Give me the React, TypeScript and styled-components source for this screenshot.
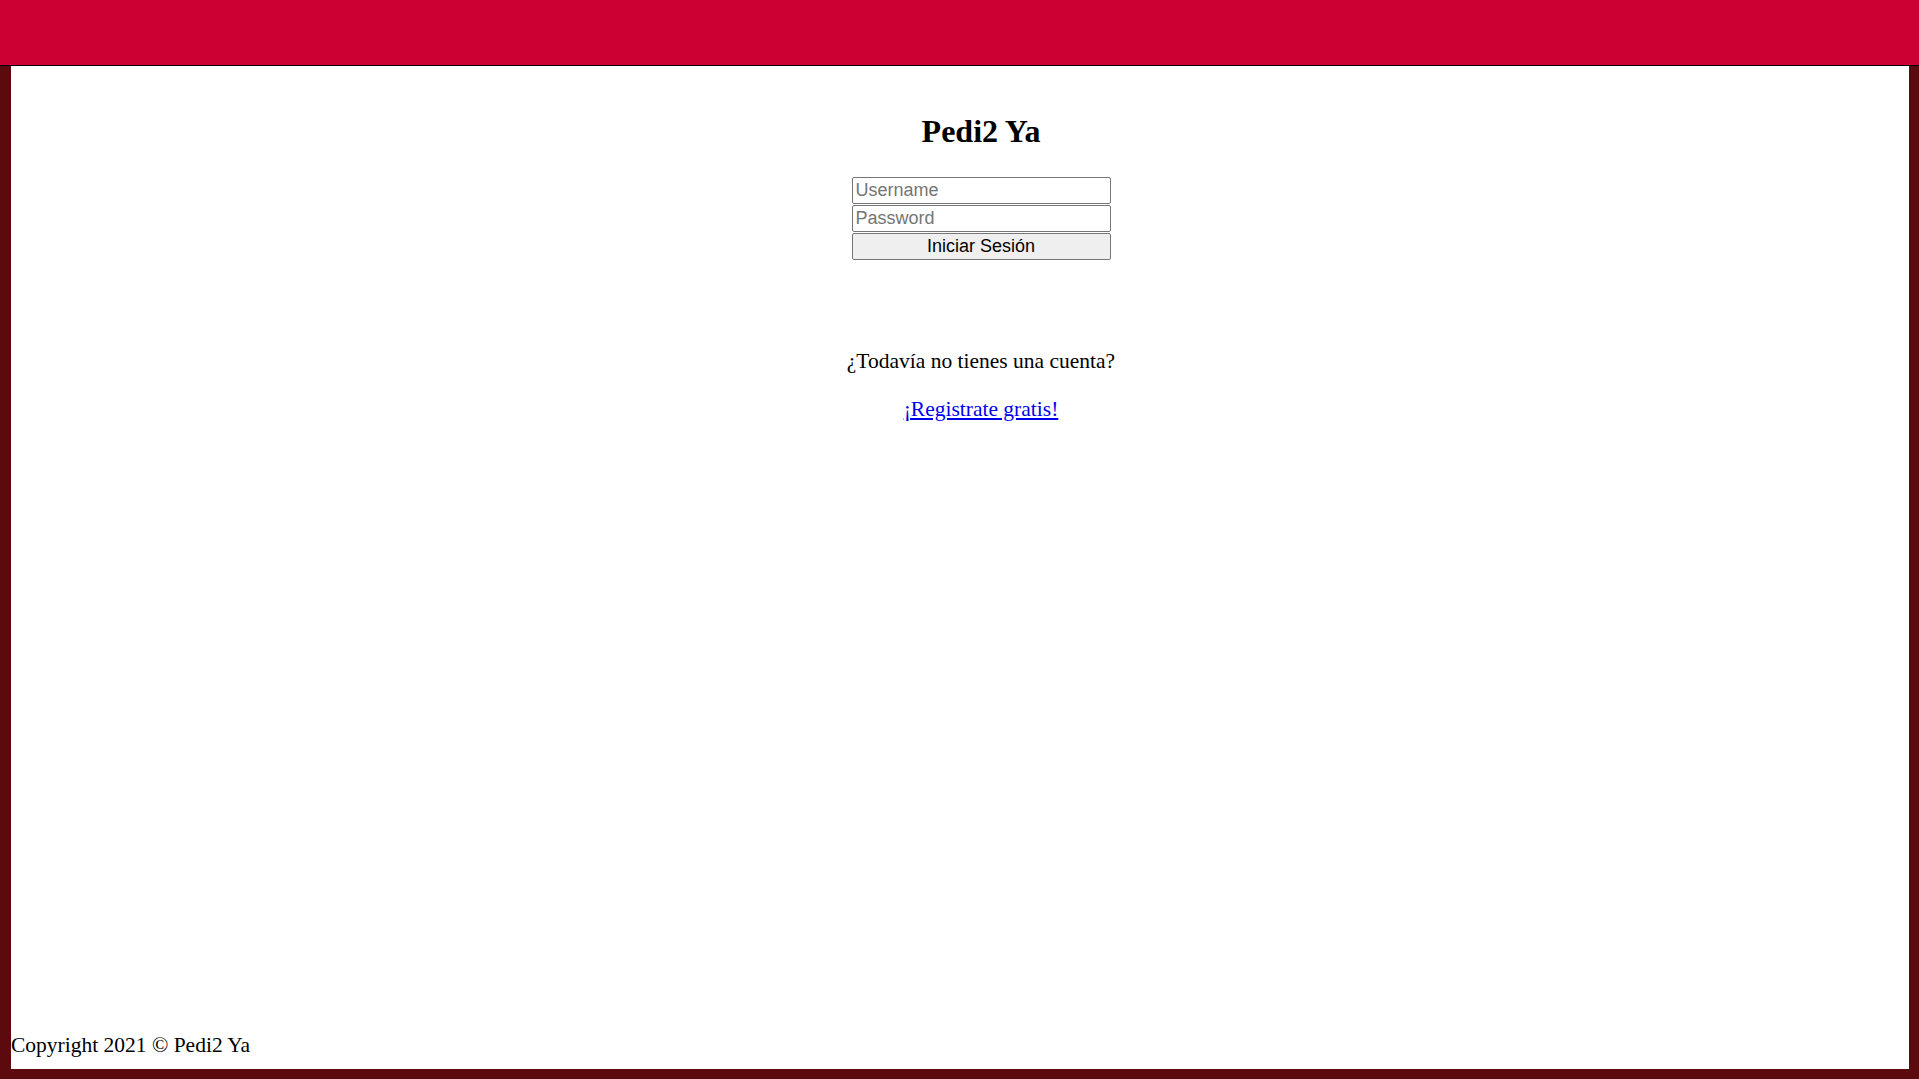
import styled, { createGlobalStyle } from "styled-components";

const GlobalStyle = createGlobalStyle`
  html, body {
    margin: 0;
    padding: 0;
    height: 100%;
  }

  body {
    background-color: #5c0a0e;
    font-family: "Liberation Serif", "Times New Roman", serif;
  }

  #root {
    height: 100%;
  }
`;

const App = () => {
  return (
    <>
      <GlobalStyle />
      <Page>
        <Header />
        <Main>
          <Content>
            <Title>Pedi2 Ya</Title>
            <LoginForm onSubmit={(event) => event.preventDefault()}>
              <Field type="text" placeholder="Username" />
              <Field type="password" placeholder="Password" />
              <LoginButton type="submit">Iniciar Sesión</LoginButton>
            </LoginForm>
            <Question>¿Todavía no tienes una cuenta?</Question>
            <RegisterLink href="#">¡Registrate gratis!</RegisterLink>
          </Content>
          <Footer>Copyright 2021 © Pedi2 Ya</Footer>
        </Main>
      </Page>
    </>
  );
};

const Page = styled.div`
  height: 100%;
  display: flex;
  flex-direction: column;
`;

const Header = styled.header`
  height: 65px;
  flex-shrink: 0;
  background-color: #cc0033;
  border-bottom: 1px solid #000;
`;

const Main = styled.main`
  flex: 1;
  margin: 0 10px 10px 11px;
  background-color: #fff;

  display: flex;
  flex-direction: column;
`;

const Content = styled.div`
  flex: 1;
  padding-left: 42px;

  display: flex;
  flex-direction: column;
  align-items: center;
`;

const Title = styled.h1`
  margin: 47px 0 0;
  font-size: 32px;
  line-height: 37px;
  font-weight: bold;
`;

const LoginForm = styled.form`
  width: 259px;
  margin-top: 27px;

  display: flex;
  flex-direction: column;
  gap: 1px;
`;

const Field = styled.input`
  box-sizing: border-box;
  height: 27px;
  width: 100%;
  margin: 0;
  padding: 1px 3px;
  border: 1px solid #767676;
  border-radius: 2px;
  font-family: Arial, "Liberation Sans", sans-serif;
  font-size: 18px;
  color: #000;

  &::placeholder {
    color: #757575;
  }
`;

const LoginButton = styled.button`
  box-sizing: border-box;
  height: 27px;
  width: 100%;
  margin: 0;
  padding: 1px 6px;
  border: 1px solid #767676;
  border-radius: 2px;
  background-color: #efefef;
  font-family: Arial, "Liberation Sans", sans-serif;
  font-size: 18px;
  color: #000;
`;

const Question = styled.p`
  margin: 89px 0 0;
  font-size: 21.5px;
  line-height: 24px;
`;

const RegisterLink = styled.a`
  margin-top: 24px;
  font-size: 21.5px;
  line-height: 24px;
  color: #0000ee;
  text-decoration: underline;
`;

const Footer = styled.footer`
  padding-bottom: 12px;
  font-size: 21.5px;
  line-height: 24px;
  color: #000;
`;

export default App;
